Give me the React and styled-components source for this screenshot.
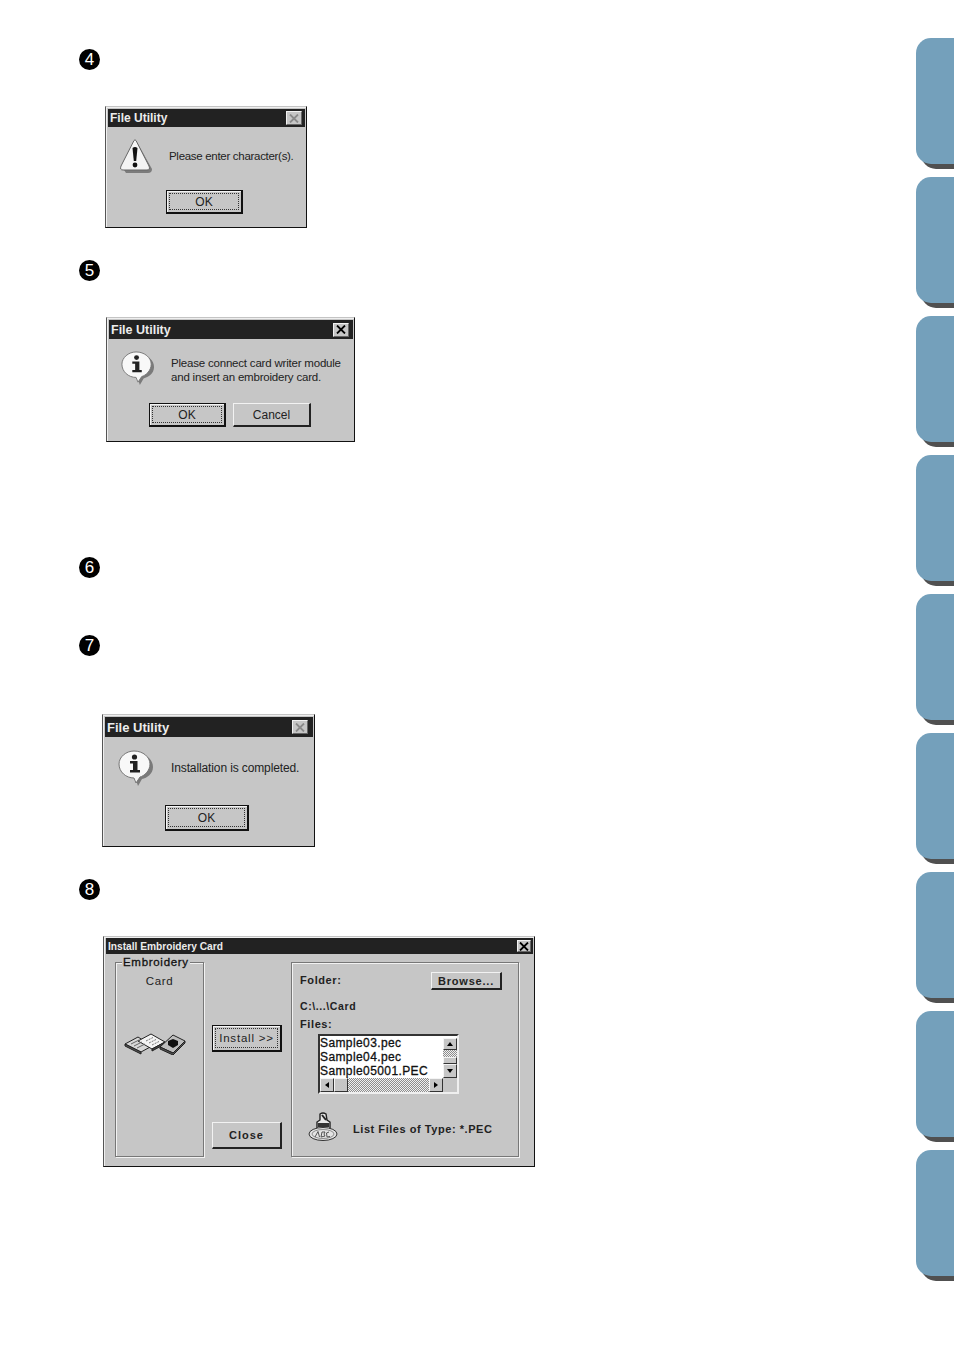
import React from "react";
import styled, { createGlobalStyle } from "styled-components";

const GlobalStyle = createGlobalStyle`
  html, body {
    margin: 0;
    padding: 0;
    background: #fff;
    font-family: "Liberation Sans", Arial, sans-serif;
  }
`;

const Page = styled.div`
  width: 954px;
  height: 1348px;
  display: flex;
  overflow: hidden;
`;

const Main = styled.main`
  flex: 1;
  padding-top: 49px;
`;

const Rail = styled.aside`
  width: 38px;
  padding-top: 37.5px;
  display: flex;
  flex-direction: column;
  gap: 13px;
`;

const Tab = styled.div`
  height: 126px;
  background: #74a0bb;
  border-radius: 15px 0 0 15px;
  box-shadow: 5px 5px 0 #505050;
`;

const Marker = styled.div`
  width: 21px;
  height: 21px;
  margin: ${(p) => p.$top}px 0 0 79px;
  border-radius: 50%;
  background: #000;
  color: #fff;
  font-size: 17px;
  line-height: 21px;
  text-align: center;
`;

const Dialog = styled.section`
  box-sizing: border-box;
  width: ${(p) => p.$w}px;
  height: ${(p) => p.$h}px;
  margin: ${(p) => p.$top}px 0 0 ${(p) => p.$left}px;
  padding: ${(p) => p.$padTop ?? 2}px 1px 1px 2px;
  background: #c6c6c6;
  border-style: solid;
  border-width: 1px;
  border-color: #c4c4c4 #111 #111 #555;
  box-shadow: inset 1px 1px 0 #efefef;
`;

const TitleBar = styled.header`
  display: flex;
  align-items: center;
  justify-content: space-between;
  box-sizing: border-box;
  height: ${(p) => p.$h}px;
  padding: 0 ${(p) => p.$end}px 0 2px;
  background: #222;
  color: #ececec;
  font-size: ${(p) => p.$size}px;
  font-weight: 700;
`;

const CloseBox = styled.div`
  box-sizing: border-box;
  width: ${(p) => p.$w || 16}px;
  height: ${(p) => p.$hh || 14}px;
  display: flex;
  align-items: center;
  justify-content: center;
  background: #c6c6c6;
  border: 1px solid;
  border-color: #f2f2f2 #666 #666 #f2f2f2;
  color: ${(p) => (p.$off ? "#8a8a8a" : "#000")};
`;

const Message = styled.div`
  display: flex;
  align-items: center;
  padding: ${(p) => p.$top}px 0 0 ${(p) => p.$left}px;
  gap: ${(p) => p.$gap}px;
`;

const MessageText = styled.p`
  margin: ${(p) => p.$down || 0}px 0 0;
  font-size: ${(p) => p.$size || 11.5}px;
  letter-spacing: ${(p) => p.$track || 0}px;
  line-height: 14px;
  color: #222;
  white-space: nowrap;
`;

const Buttons = styled.div`
  display: flex;
  gap: 7px;
  padding: ${(p) => p.$top}px 0 0 ${(p) => p.$left}px;
`;

const Button = styled.button`
  box-sizing: border-box;
  width: ${(p) => p.$w}px;
  height: ${(p) => p.$h}px;
  padding: 0;
  display: flex;
  align-items: center;
  justify-content: center;
  background: #c6c6c6;
  color: #222;
  font-family: inherit;
  font-size: ${(p) => p.$size || 12}px;
  font-weight: ${(p) => (p.$bold ? 700 : 400)};
  letter-spacing: ${(p) => p.$track || 0}px;
  border-style: solid;
  border-width: 1px 2px 2px 1px;
  border-color: ${(p) => (p.$focus ? "#111" : "#f2f2f2 #222 #222 #f2f2f2")};
  box-shadow: ${(p) => (p.$focus ? "inset 1px 1px 0 #f4f4f4" : "none")};
`;

const FocusRing = styled.span`
  box-sizing: border-box;
  width: calc(100% - 4px);
  height: calc(100% - 4px);
  display: flex;
  align-items: center;
  justify-content: center;
  border: 1px dotted #333;
`;

const CardBody = styled.div`
  display: grid;
  grid-template-columns: 89px 70px 229px;
  column-gap: 8px;
  padding: 8px 0 0 9px;
  font-size: 11px;
  font-weight: 700;
  letter-spacing: 0.6px;
  color: #222;
`;

const Group = styled.div`
  position: relative;
  box-sizing: border-box;
  height: 195px;
  border: 1px solid #777;
  box-shadow: 1px 1px 0 #f2f2f2, inset 1px 1px 0 #f2f2f2;
  display: flex;
  flex-direction: column;
  align-items: center;
  padding-top: 11px;
`;

const Legend = styled.span`
  position: absolute;
  top: -8px;
  left: 6px;
  padding: 0 1px;
  background: #c6c6c6;
  font-size: 11.5px;
  line-height: 14px;
  font-weight: 400;
  color: #111;
  letter-spacing: 0.7px;
  -webkit-text-stroke: 0.3px #111;
`;

const GroupLabel = styled.span`
  font-size: 11.5px;
  line-height: 14px;
  font-weight: 400;
`;

const CardArt = styled.div`
  margin: 45px 9px 0 0;
  line-height: 0;
`;

const Actions = styled.div`
  height: 195px;
  box-sizing: border-box;
  display: flex;
  flex-direction: column;
  justify-content: space-between;
  padding: 63px 0 8px;
`;

const Panel = styled.div`
  box-sizing: border-box;
  height: 195px;
  margin-left: 1px;
  padding: 9px 16px 0 8px;
  border: 1px solid #777;
  box-shadow: 1px 1px 0 #f2f2f2, inset 1px 1px 0 #f2f2f2;
`;

const FolderRow = styled.div`
  display: flex;
  align-items: center;
  justify-content: space-between;
  height: 18px;
`;

const FolderLabel = styled.span`
  margin-top: -2px;
`;

const Line = styled.div`
  height: 14px;
  line-height: 14px;
  margin-top: ${(p) => p.$top}px;
  font-size: ${(p) => p.$size || 11}px;
`;

const ListBox = styled.div`
  box-sizing: border-box;
  width: 141px;
  height: 60px;
  margin: 3px 0 0 18px;
  display: grid;
  grid-template-columns: 123px 14px;
  grid-template-rows: 42px 14px;
  border: 2px solid;
  border-color: #333 #efefef #efefef #333;
`;

const FileList = styled.ul`
  margin: 0;
  padding: 0;
  list-style: none;
  background: #fff;
  overflow: hidden;
  font-size: 12px;
  line-height: 14px;
  letter-spacing: 0.4px;
  font-weight: 400;
  color: #111;
  -webkit-text-stroke: 0.3px #111;
`;

const VScroll = styled.div`
  display: flex;
  flex-direction: column;
  padding-top: 2px;
  background: #fff;
`;

const HScroll = styled.div`
  display: flex;
  background: #fff;
`;

const Track = styled.div`
  flex: 1;
  background: repeating-conic-gradient(#8d8d8d 0 25%, #f0f0f0 0 50%) 0 0 / 2px 2px;
`;

const ScrollBtn = styled.div`
  box-sizing: border-box;
  flex: none;
  width: ${(p) => p.$w}px;
  height: ${(p) => p.$h}px;
  display: flex;
  align-items: center;
  justify-content: center;
  background: #c6c6c6;
  border: 1px solid;
  border-color: #f4f4f4 #333 #333 #f4f4f4;
`;

const Corner = styled.div`
  background: #c6c6c6;
`;

const Arrow = styled.i`
  width: 0;
  height: 0;
  border: 3px solid transparent;
  ${(p) => p.$dir === "up" && "border-bottom: 4px solid #000; border-top-width: 0;"}
  ${(p) => p.$dir === "down" && "border-top: 4px solid #000; border-bottom-width: 0;"}
  ${(p) => p.$dir === "left" && "border-right: 4px solid #000; border-left-width: 0;"}
  ${(p) => p.$dir === "right" && "border-left: 4px solid #000; border-right-width: 0;"}
`;

const TypeRow = styled.div`
  display: flex;
  align-items: center;
  gap: 15px;
  margin: 18px 0 0 8px;
  white-space: nowrap;
  letter-spacing: 0.55px;
`;

const TypeLabel = styled.span`
  padding-top: 4px;
`;

const XMark = () => (
  <svg width="10" height="9" viewBox="0 0 10 9">
    <path d="M1 0.5 L9 8.5 M9 0.5 L1 8.5" stroke="currentColor" strokeWidth="1.8" fill="none" />
  </svg>
);

const WarningIcon = () => (
  <svg width="34" height="36" viewBox="0 0 34 36">
    <path d="M19 6 L33 31 Q33 35 29 35 L7 35 L5 32 Z" fill="#7c7c7c" />
    <path d="M15 2.5 Q16 1 17 2.5 L30 28 Q31.5 32 28 32 L4 32 Q0.5 32 2 28 Z" fill="#f4f4f4" stroke="#666" strokeWidth="1" />
    <path d="M13.5 10 Q16 8 18.5 10 L17.2 23 L14.8 23 Z" fill="#111" />
    <circle cx="16" cy="27" r="2.4" fill="#111" />
  </svg>
);

const InfoIcon = ({ h = 36 }) => (
  <svg width="35" height={h} viewBox="0 0 35 36">
    <path d="M19 4 C29 4 35 10 35 17 C35 24 29 28 24 29 L20 36 L18 30 Z" fill="#7a7a7a" />
    <path d="M16 1 C25 1 32 7 32 14 C32 21 26 26 22 27 L18 33 L16 28 C8 28 1 22 1 14 C1 7 8 1 16 1 Z" fill="#f8f8f8" stroke="#777" strokeWidth="1" />
    <circle cx="16.5" cy="7" r="2.6" fill="#222" />
    <path d="M12 11 L19.5 11 L19.5 20 L22 20 L22 22.5 L12 22.5 L12 20 L15 20 L15 13.5 L12 13.5 Z" fill="#222" />
  </svg>
);

const CardsIcon = () => (
  <svg width="62" height="22" viewBox="0 0 62 22">
    <g stroke="#222" strokeWidth="1">
      <path d="M1 11 L14 4 L28 13 L17 19 Z" fill="#d8d8d8" />
      <path d="M1 11 L1 13 L17 21 L17 19 Z" fill="#555" />
      <path d="M14 8 L27 1 L41 9 L28 16 Z" fill="#f4f4f4" />
      <path d="M28 16 L28 18 L41 11 L41 9 Z" fill="#444" />
      <path d="M36 14 L49 2 L61 8 L49 20 Z" fill="#bdbdbd" />
      <path d="M36 14 L36 16 L49 22 L61 10 L61 8 L49 20 Z" fill="#555" />
    </g>
    <path d="M7 11 L15 7 M10 13 L18 9 M13 15 L21 11" stroke="#666" strokeWidth="1" />
    <path d="M22 8 L29 4.5 M25 10 L32 6.5 M28 12 L35 8.5" stroke="#777" strokeWidth="1" strokeDasharray="2 1" />
    <path d="M44 8 L49 6 L54 8 L54 12 L49 15 L44 12 Z" fill="#111" />
  </svg>
);

const StitchIcon = () => (
  <svg width="30" height="30" viewBox="0 0 30 30">
    <path d="M12 2 Q15 0 18 2 L19 8 L22 10 L22 17 L9 17 L9 10 L12 8 Z" fill="#e8e8e8" stroke="#222" strokeWidth="1.4" />
    <path d="M10 11 L21 11 L21 15 L10 15 Z" fill="#333" />
    <path d="M14 3 L18 8" stroke="#222" strokeWidth="2" />
    <ellipse cx="15" cy="22" rx="14" ry="6.5" fill="#e4e4e4" stroke="#333" strokeWidth="1" />
    <ellipse cx="15" cy="22" rx="11" ry="4.5" fill="none" stroke="#777" strokeWidth="0.8" />
    <path d="M7 25 L10 19.5 L11.5 25 M14 20 L13 25 L17 24 L16 22 L17 20 Z M21 20 L18.5 21 L19 25 L22 24.5" fill="none" stroke="#444" strokeWidth="0.9" />
  </svg>
);

const FocusButton = ({ children, ...rest }) => (
  <Button $focus {...rest}>
    <FocusRing>{children}</FocusRing>
  </Button>
);

const App = () => {
  return (
    <Page>
      <GlobalStyle />
      <Main>
        <Marker $top={0}>4</Marker>
        <Dialog $top={36} $left={105} $w={202} $h={122}>
          <TitleBar $h={18} $size={12} $end={3}>
            File Utility
            <CloseBox $off><XMark /></CloseBox>
          </TitleBar>
          <Message $top={11} $left={11} $gap={16}>
            <WarningIcon />
            <MessageText $track={-0.3}>Please enter character(s).</MessageText>
          </Message>
          <Buttons $top={16} $left={58}>
            <FocusButton $w={77} $h={24}>OK</FocusButton>
          </Buttons>
        </Dialog>

        <Marker $top={32}>5</Marker>
        <Dialog $top={36} $left={106} $w={249} $h={125}>
          <TitleBar $h={19} $size={12.5} $end={4}>
            File Utility
            <CloseBox><XMark /></CloseBox>
          </TitleBar>
          <Message $top={12} $left={11} $gap={16}>
            <InfoIcon h={34} />
            <MessageText $track={-0.2} $down={4}>
              Please connect card writer module
              <br />
              and insert an embroidery card.
            </MessageText>
          </Message>
          <Buttons $top={18} $left={40}>
            <FocusButton $w={77} $h={24}>OK</FocusButton>
            <Button $w={78} $h={24}>Cancel</Button>
          </Buttons>
        </Dialog>

        <Marker $top={115}>6</Marker>
        <Marker $top={57}>7</Marker>
        <Dialog $top={58} $left={102} $w={213} $h={133}>
          <TitleBar $h={20} $size={13} $end={5}>
            File Utility
            <CloseBox $off><XMark /></CloseBox>
          </TitleBar>
          <Message $top={13} $left={13} $gap={18}>
            <InfoIcon />
            <MessageText $size={12} $track={-0.12}>Installation is completed.</MessageText>
          </Message>
          <Buttons $top={19} $left={60}>
            <FocusButton $w={84} $h={26}>OK</FocusButton>
          </Buttons>
        </Dialog>

        <Marker $top={32}>8</Marker>
        <Dialog $top={36} $left={103} $w={432} $h={231} $padTop={1}>
          <TitleBar $h={16} $size={10.2} $end={2}>
            Install Embroidery Card
            <CloseBox $w={14} $hh={12}><XMark /></CloseBox>
          </TitleBar>
          <CardBody>
            <Group>
              <Legend>Embroidery</Legend>
              <GroupLabel>Card</GroupLabel>
              <CardArt><CardsIcon /></CardArt>
            </Group>
            <Actions>
              <FocusButton $w={70} $h={27} $size={11.5} $track={0.8}>Install &gt;&gt;</FocusButton>
              <Button $w={70} $h={27} $size={11} $bold $track={1}>Close</Button>
            </Actions>
            <Panel>
              <FolderRow>
                <FolderLabel>Folder:</FolderLabel>
                <Button $w={71} $h={18} $size={11} $bold $track={0.8}>Browse...</Button>
              </FolderRow>
              <Line $top={9} $size={10.5}>C:\...\Card</Line>
              <Line $top={4}>Files:</Line>
              <ListBox>
                <FileList>
                  <li>Sample03.pec</li>
                  <li>Sample04.pec</li>
                  <li>Sample05001.PEC</li>
                </FileList>
                <VScroll>
                  <ScrollBtn $w={14} $h={12}><Arrow $dir="up" /></ScrollBtn>
                  <Track />
                  <ScrollBtn $w={14} $h={7} />
                  <ScrollBtn $w={14} $h={14}><Arrow $dir="down" /></ScrollBtn>
                </VScroll>
                <HScroll>
                  <ScrollBtn $w={14} $h={14}><Arrow $dir="left" /></ScrollBtn>
                  <ScrollBtn $w={14} $h={14} />
                  <Track />
                  <ScrollBtn $w={14} $h={14}><Arrow $dir="right" /></ScrollBtn>
                </HScroll>
                <Corner />
              </ListBox>
              <TypeRow>
                <StitchIcon />
                <TypeLabel>List Files of Type: *.PEC</TypeLabel>
              </TypeRow>
            </Panel>
          </CardBody>
        </Dialog>
      </Main>
      <Rail>
        {Array.from({ length: 9 }, (_, i) => (
          <Tab key={i} />
        ))}
      </Rail>
    </Page>
  );
};

export default App;
